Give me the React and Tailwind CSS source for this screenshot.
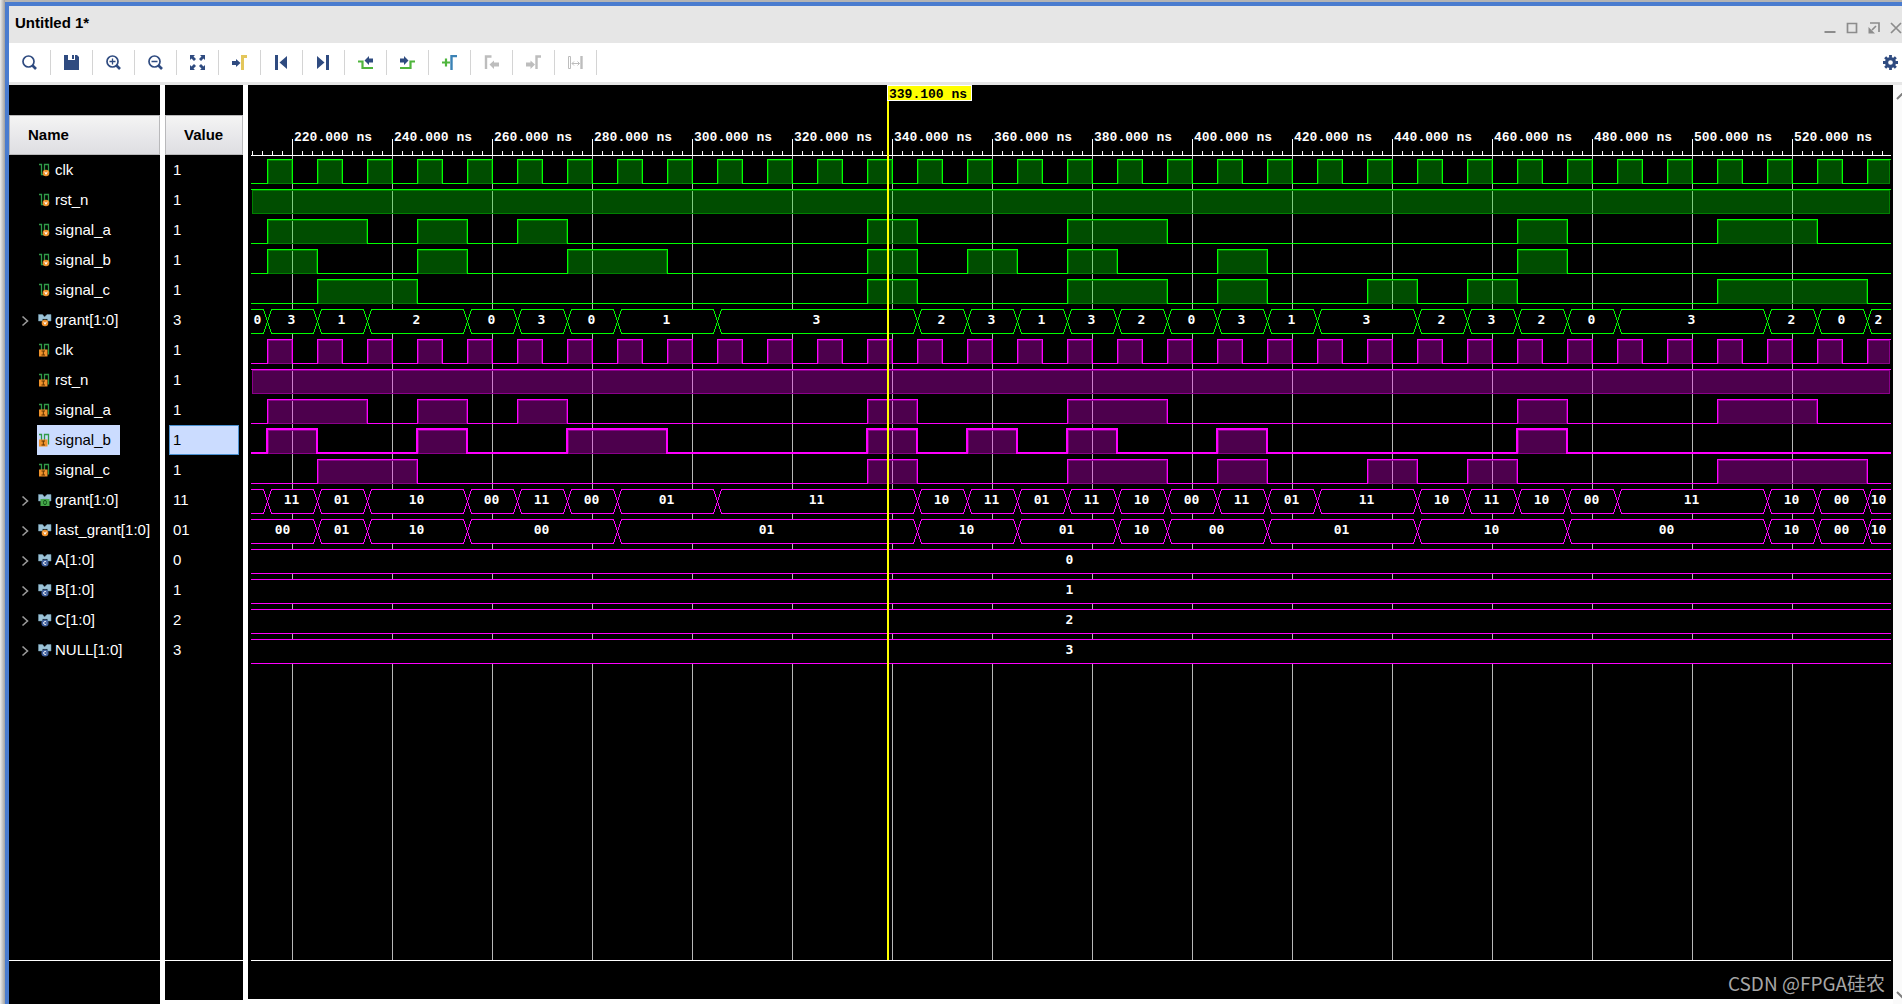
import React, { useState } from "react";

const PX_PER_NS = 5;
const START = 211;
const PLOT_W = 1640;
const ROW_H = 30;
const GRID_BOTTOM = 805;

const xOf = (t) => (t - START) * PX_PER_NS - 4;
const END = START + (PLOT_W + 4) / PX_PER_NS;

const clkHighs = Array.from({ length: 33 }, (_, i) => [215 + i * 10, 220 + i * 10]);
const aHighs = [[215, 235], [245, 255], [265, 275], [335, 345], [375, 395], [465, 475], [505, 525]];
const bHighs = [[215, 225], [245, 255], [275, 295], [335, 345], [355, 365], [375, 385], [405, 415], [465, 475]];
const cHighs = [[225, 245], [335, 345], [375, 395], [405, 415], [435, 445], [455, 465], [505, 535]];

const grantEdges = [
  215, 225, 235, 255, 265, 275, 285, 305, 345, 355, 365, 375, 385, 395, 405,
  415, 425, 445, 455, 465, 475, 485, 515, 525, 535,
];
const grantDec = "0 3 1 2 0 3 0 1 3 2 3 1 3 2 0 3 1 3 2 3 2 0 3 2 0 2".split(" ");
const grantBin = ["", ..."11 01 10 00 11 00 01 11 10 11 01 11 10 00 11 01 11 10 11 10 00 11 10 00 10".split(" ")];
const lastEdges = [225, 235, 255, 285, 345, 365, 385, 395, 415, 445, 475, 515, 525, 535];
const lastVals = "00 01 10 00 01 10 01 10 00 01 10 00 10 00 10".split(" ");

const G = { line: "#00ff00", edge: "#008000" };
const M = { line: "#ff00ff", edge: "#8b008b" };

const signals = [
  { name: "clk", value: "1", icon: "wireV", c: G, highs: clkHighs },
  { name: "rst_n", value: "1", icon: "wireV", c: G, highs: [[START, END]], full: true },
  { name: "signal_a", value: "1", icon: "wireV", c: G, highs: aHighs },
  { name: "signal_b", value: "1", icon: "wireV", c: G, highs: bHighs },
  { name: "signal_c", value: "1", icon: "wireV", c: G, highs: cHighs },
  { name: "grant[1:0]", value: "3", icon: "busV", c: G, edges: grantEdges, vals: grantDec },
  { name: "clk", value: "1", icon: "wireI", c: M, highs: clkHighs },
  { name: "rst_n", value: "1", icon: "wireI", c: M, highs: [[START, END]], full: true },
  { name: "signal_a", value: "1", icon: "wireI", c: M, highs: aHighs },
  { name: "signal_b", value: "1", icon: "wireI", c: M, highs: bHighs },
  { name: "signal_c", value: "1", icon: "wireI", c: M, highs: cHighs },
  { name: "grant[1:0]", value: "11", icon: "busO", c: M, edges: grantEdges, vals: grantBin },
  { name: "last_grant[1:0]", value: "01", icon: "busV", c: M, edges: lastEdges, vals: lastVals },
  { name: "A[1:0]", value: "0", icon: "busC", c: M, edges: [], vals: ["0"] },
  { name: "B[1:0]", value: "1", icon: "busC", c: M, edges: [], vals: ["1"] },
  { name: "C[1:0]", value: "2", icon: "busC", c: M, edges: [], vals: ["2"] },
  { name: "NULL[1:0]", value: "3", icon: "busC", c: M, edges: [], vals: ["3"] },
];

const Ico = ({ children }) => (
  <svg width="15" height="15" viewBox="0 0 15 15" fill="none">
    {children}
  </svg>
);

const NAVY = "#2f4b80";
const GREEN = "#4fb53c";
const GRAY = "#bdbdbd";

const Lens = ({ children }) => (
  <Ico>
    <circle cx="6.5" cy="6.5" r="5.5" stroke={NAVY} strokeWidth="1.7" />
    <path d="M10.5 10.5L14 14" stroke={NAVY} strokeWidth="2.6" />
    {children}
  </Ico>
);

const tools = [
  { label: "Search", icon: <Lens /> },
  {
    label: "Save",
    icon: (
      <Ico>
        <path d="M0 0H4V5H11V0H13L15 2V15H0Z" fill={NAVY} />
        <path d="M8 0H10V4H8Z" fill={NAVY} />
      </Ico>
    ),
  },
  { label: "Zoom In", icon: <Lens><path d="M3.5 6.5h6M6.5 3.5v6" stroke={NAVY} strokeWidth="1.3" /></Lens> },
  { label: "Zoom Out", icon: <Lens><path d="M3.5 6.5h6" stroke={NAVY} strokeWidth="1.5" /></Lens> },
  {
    label: "Zoom Fit",
    icon: (
      <Ico>
        <path
          d="M0 0H5L3.5 1.5 6 4 4 6 1.5 3.5 0 5ZM15 0H10L11.5 1.5 9 4 11 6 13.5 3.5 15 5ZM0 15H5L3.5 13.5 6 11 4 9 1.5 11.5 0 10ZM15 15H10L11.5 13.5 9 11 11 9 13.5 11.5 15 10Z"
          fill={NAVY}
        />
      </Ico>
    ),
  },
  {
    label: "Go to Cursor",
    icon: (
      <Ico>
        <path d="M0 6H4V4L8.5 8 4 12V10H0Z" fill={NAVY} />
        <path d="M10.5 15V1.5H15" stroke="#e3c65b" strokeWidth="3" />
      </Ico>
    ),
  },
  {
    label: "Previous Marker",
    icon: (
      <Ico>
        <path d="M1 0H4V15H1ZM13 1V14L5.5 7.5Z" fill={NAVY} />
      </Ico>
    ),
  },
  {
    label: "Next Marker",
    icon: (
      <Ico>
        <path d="M10 0H13V15H10ZM1 1V14L8.5 7.5Z" fill={NAVY} />
      </Ico>
    ),
  },
  {
    label: "Previous Transition",
    icon: (
      <Ico>
        <path d="M0 6.5H4.5V13H15" stroke={GREEN} strokeWidth="2.2" />
        <path d="M6.5 5.5L11 1V3.5H15V7.5H11V10Z" fill={NAVY} />
      </Ico>
    ),
  },
  {
    label: "Next Transition",
    icon: (
      <Ico>
        <path d="M0 13H10.5V6.5H15" stroke={GREEN} strokeWidth="2.2" />
        <path d="M8.5 5.5L4 1V3.5H0V7.5H4V10Z" fill={NAVY} />
      </Ico>
    ),
  },
  {
    label: "Add Marker",
    icon: (
      <Ico>
        <path d="M0 7.5H8M4 3.5V11.5" stroke={GREEN} strokeWidth="2.2" />
        <path d="M9.5 15V1H15" stroke="#3b82b5" strokeWidth="2.4" />
      </Ico>
    ),
  },
  {
    label: "Previous Edge",
    off: true,
    icon: (
      <Ico>
        <path d="M2 14V1.5H7.5" stroke={GRAY} strokeWidth="2.4" />
        <path d="M5.5 9.5L10 5.5V7.5H15V11.5H10V14Z" fill={GRAY} />
      </Ico>
    ),
  },
  {
    label: "Next Edge",
    off: true,
    icon: (
      <Ico>
        <path d="M10.5 14V1.5H15" stroke={GRAY} strokeWidth="2.4" />
        <path d="M9 9.5L4.5 5.5V7.5H0V11.5H4.5V14Z" fill={GRAY} />
      </Ico>
    ),
  },
  {
    label: "Swap Markers",
    off: true,
    icon: (
      <Ico>
        <path d="M0.5 1.5H2.5V13.5H0.5Z" stroke={GRAY} />
        <path d="M13.5 1V14" stroke={GRAY} strokeWidth="2.4" />
        <path d="M4 8.5H11.5M6 6.5L4 8.5 6 10.5M9.5 6.5L11.5 8.5 9.5 10.5" stroke={GRAY} />
      </Ico>
    ),
  },
];

// small glyph in front of every signal name
const SignalIcon = ({ kind }) => {
  const wire = kind.startsWith("wire");
  const tag = kind.slice(-1);
  return (
    <svg width="14" height="14" viewBox="0 0 14 14" className="shrink-0">
      {wire ? (
        <path d="M1 1.5H3.5V11.5H6.5V1.5H10.5V11.5" fill="none" stroke="#2f9a48" strokeWidth="1.3" />
      ) : (
        <path d="M0.5 1.5H4.5L6.5 4 9 1.5H13V8H9.5V6H4.5V8H0.5Z" fill="#9cc3d8" stroke="#6f98ad" strokeWidth="0.5" />
      )}
      {tag === "V" && (
        <>
          <circle cx={wire ? 8 : 7} cy="10" r="3.3" fill="#f0922b" />
          <path d={wire ? "M6.7 8.7L8 11.3 9.3 8.7" : "M5.7 8.7L7 11.3 8.3 8.7"} fill="none" stroke="#fff" />
        </>
      )}
      {tag === "I" && (
        <>
          <rect x="1" y="6.5" width="8.500" height="7" fill="#f0922b" />
          <path d="M3.5 8H7M5.3 8V12M3.5 12H7" fill="none" stroke="#5a3200" />
        </>
      )}
      {tag === "O" && (
        <>
          <rect x="2.5" y="6" width="9" height="7" fill="#45a749" />
          <ellipse cx="7" cy="9.5" rx="1.5" ry="2.2" fill="none" stroke="#12561b" />
        </>
      )}
      {tag === "C" && (
        <>
          <circle cx="7" cy="10" r="3.6" fill="#3f5f9c" />
          <path d="M8.3 9A1.5 1.5 0 1 0 8.3 11" fill="none" stroke="#fff" />
        </>
      )}
    </svg>
  );
};

const Digital = ({ s, y, bold }) => {
  const top = y + 4.5;
  const bot = y + 28.5;
  let d = `M0 ${s.full ? top : bot}`;
  if (!s.full) {
    s.highs.forEach(([a, b]) => {
      d += `H${xOf(a) + 0.5}V${top}`;
      d += b < END ? `H${xOf(b) + 0.5}V${bot}` : `H${PLOT_W}`;
    });
  }
  if (s.full || s.highs[s.highs.length - 1][1] < END) d += `H${PLOT_W}`;
  return (
    <g>
      {s.highs.map(([a, b]) => {
        const x = Math.max(xOf(a), 0) + 0.5;
        const w = Math.min(xOf(b), PLOT_W - 1) + 0.5 - x;
        return (
          <rect key={a} x={x + 1} y={top + 1} width={w - 2} height="23" fill={s.c.line} fillOpacity="0.3" stroke={s.c.edge} />
        );
      })}
      <path
        d={d}
        fill="none"
        stroke={s.c.line}
        strokeWidth={bold ? 2 : 1}
        transform={bold ? "translate(-0.5 -0.5)" : undefined}
      />
    </g>
  );
};

const Bus = ({ s, y }) => {
  const top = y + 4.5;
  const bot = y + 28.5;
  const mid = y + 16.5;
  const xs = [0, ...s.edges.map(xOf), PLOT_W];
  return (
    <g>
      <rect x="0" y={y + 4} width={PLOT_W} height="25" fill="#000" />
      {s.vals.map((v, i) => {
        const first = i === 0;
        const last = i === s.vals.length - 1;
        const l = xs[i] + 0.5;
        const r = xs[i + 1] + 0.5;
        const half = (edge) =>
          (first ? `M0 ${edge}` : `M${l} ${mid}L${l + 4} ${edge}`) +
          (last ? `H${PLOT_W}` : `H${r - 4}L${r} ${mid}`);
        return (
          <g key={i}>
            <path d={half(top) + half(bot)} fill="none" stroke={s.c.line} />
            <text
              x={(l + r) / 2 - (first ? 2 : 1)}
              y={y + 19}
              textAnchor="middle"
              fill="#fff"
              className="font-['DejaVu_Sans_Mono',monospace] text-[13px] font-bold"
            >
              {v}
            </text>
          </g>
        );
      })}
    </g>
  );
};

const Waves = ({ selected }) => {
  const ticks = Array.from({ length: 164 }, (_, i) => 212 + i * 2);
  const majors = Array.from({ length: 16 }, (_, i) => 220 + i * 20);
  return (
    <svg width={PLOT_W} height="914" className="block font-['Liberation_Mono',monospace]" shapeRendering="crispEdges">
      {ticks.map((t) => (
        <path key={t} d={`M${xOf(t) + 0.5} ${t % 10 === 0 ? 65 : 66}V70`} stroke="#fff" />
      ))}
      {majors.map((t) => (
        <g key={t}>
          <path d={`M${xOf(t) + 0.5} 54V70`} stroke="#fff" />
          <path d={`M${xOf(t) + 0.5} 71V${GRID_BOTTOM + 70}`} stroke="#b8b8b8" />
          <text x={xOf(t) + 2} y="56" fill="#fff" className="text-[13px] font-bold">
            {t}.000 ns
          </text>
        </g>
      ))}
      <path d={`M0 70.5H${PLOT_W}M0 875.5H${PLOT_W}`} stroke="#fff" />
      <g>
        {signals.map((s, i) =>
          s.highs ? (
            <Digital key={i} s={s} y={70 + i * ROW_H} bold={i === selected} />
          ) : (
            <Bus key={i} s={s} y={70 + i * ROW_H} />
          )
        )}
      </g>
      <rect x="636" y="0" width="2" height="875" fill="#ffff00" />
      <rect x="636.5" y="0.5" width="84" height="15" fill="#ffff00" stroke="#fff" />
      <text x="638" y="13" fill="#000" className="text-[13px] font-bold">
        339.100 ns
      </text>
    </svg>
  );
};

const App = () => {
  const [selected, setSelected] = useState(9);

  return (
    <div className="flex h-screen w-full overflow-hidden bg-white font-['Liberation_Sans',Arial,sans-serif] text-[15px] text-black">
      <div className="w-[5px] shrink-0 bg-linear-to-r from-[#ececec] to-[#a0a0a0]" />
      <div className="flex min-w-0 flex-1 flex-col border-l-4 border-[#4a7ccf]">
        <div className="-ml-1 h-[2px] shrink-0 bg-[#b4b4b4]" />
        <div className="-ml-1 h-1 shrink-0 bg-[#4a7ccf]" />

        <header className="flex h-[37px] shrink-0 items-center justify-between bg-[#e6e6e6] pl-[6px]">
          <h1 className="pb-[2px] text-[15px] font-bold">Untitled 1*</h1>
          <div className="flex gap-[10px] pt-[6px]">
            <button aria-label="Minimize">
              <svg width="12" height="12" viewBox="0 0 12 12"><path d="M0.5 10H11.5" stroke="#8c8c8c" strokeWidth="2" /></svg>
            </button>
            <button aria-label="Maximize">
              <svg width="12" height="12" viewBox="0 0 12 12"><path d="M1.5 1.5H10.5V10.5H1.5Z" fill="none" stroke="#8c8c8c" strokeWidth="1.7" /></svg>
            </button>
            <button aria-label="Float">
              <svg width="12" height="12" viewBox="0 0 12 12">
                <path d="M2 1H11V10M8 4L4 8" fill="none" stroke="#8c8c8c" strokeWidth="1.7" />
                <path d="M0.5 5V11.5H7Z" fill="#8c8c8c" />
              </svg>
            </button>
            <button aria-label="Close">
              <svg width="12" height="12" viewBox="0 0 12 12"><path d="M1 1L11 11M11 1L1 11" stroke="#8c8c8c" strokeWidth="1.7" /></svg>
            </button>
          </div>
        </header>

        <div className="flex h-[42px] shrink-0 items-center justify-between border-b-3 border-[#e6e6e6] bg-white pr-1">
          <div className="flex">
            {tools.map((t) => (
              <button
                key={t.label}
                aria-label={t.label}
                disabled={t.off}
                className="flex h-[25px] w-[42px] items-center justify-center border-r border-[#d4d4d4]"
              >
                {t.icon}
              </button>
            ))}
          </div>
          <button aria-label="Settings">
            <svg width="15" height="15" viewBox="0 0 16 16">
              <circle cx="8" cy="8" r="4.2" fill="none" stroke={NAVY} strokeWidth="3.4" />
              <path d="M8 0V3M8 13V16M0 8H3M13 8H16M2.3 2.3L4.5 4.5M11.5 11.5L13.7 13.7M13.7 2.3L11.5 4.5M4.5 11.5L2.3 13.7" stroke={NAVY} strokeWidth="3" />
            </svg>
          </button>
        </div>

        <main className="flex min-h-0 flex-1">
          <section className="flex w-[151px] shrink-0 flex-col bg-black text-white">
            <div className="h-[30px] shrink-0" />
            <h2 className="flex h-10 shrink-0 items-center border border-[#b9b9bb] bg-linear-to-b from-[#f4f4f4] to-[#dedee2] pl-[18px] text-[15px] font-bold text-black">
              Name
            </h2>
            <ul className="flex-1 border-b border-white">
              {signals.map((s, i) => (
                <li key={i} className="flex h-[30px] items-center">
                  <span className="flex w-7 shrink-0 pt-[2px] pl-3">
                    {s.vals && (
                      <svg width="8" height="12" viewBox="0 0 8 12">
                        <path d="M1.5 1.5L6.5 6 1.5 10.5" fill="none" stroke="#9a9a9a" strokeWidth="1.6" />
                      </svg>
                    )}
                  </span>
                  <button
                    onClick={() => setSelected(i)}
                    className={
                      i === selected
                        ? "flex h-[30px] items-center gap-[3px] bg-[#cbdcff] pr-[9px] pl-[1px] whitespace-nowrap text-black"
                        : "flex h-[30px] items-center gap-[3px] pl-[1px] whitespace-nowrap"
                    }
                  >
                    <SignalIcon kind={s.icon} />
                    {s.name}
                  </button>
                </li>
              ))}
            </ul>
            <div className="h-[43px] shrink-0" />
          </section>

          <div className="w-[5px] shrink-0 bg-white" />

          <section className="mb-1 flex w-[78px] shrink-0 flex-col bg-black text-white">
            <div className="h-[30px] shrink-0" />
            <h2 className="flex h-10 shrink-0 items-center border border-[#b9b9bb] bg-linear-to-b from-[#f4f4f4] to-[#dedee2] pl-[18px] text-[15px] font-bold text-black">
              Value
            </h2>
            <ul className="flex-1 border-b border-white px-1">
              {signals.map((s, i) => (
                <li
                  key={i}
                  className={
                    i === selected
                      ? "flex h-[30px] items-center border border-[#4a90d0] bg-[#cbdcff] pl-[3px] text-black"
                      : "flex h-[30px] items-center pl-1"
                  }
                >
                  {s.value}
                </li>
              ))}
            </ul>
            <div className="h-[39px] shrink-0" />
          </section>

          <div className="w-[5px] shrink-0 bg-white" />

          <section className="relative mb-[5px] min-w-0 flex-1 overflow-hidden bg-black pl-[3px]">
            <Waves selected={selected} />
            <p className="absolute right-2 bottom-[2px] font-['Noto_Sans_CJK_SC',sans-serif] text-[19px] leading-7 text-[#a6a6a6]">
              CSDN @FPGA硅农
            </p>
          </section>

          <div className="flex w-[9px] shrink-0 flex-col justify-between overflow-hidden bg-[#fafafa] pt-2 pb-[5px] pl-[3px]">
            <svg width="12" height="8" viewBox="0 0 12 8"><path d="M1 6L6 1 11 6" fill="none" stroke="#7d7d7d" strokeWidth="2" /></svg>
            <svg width="12" height="8" viewBox="0 0 12 8"><path d="M1 1L6 6 11 1" fill="none" stroke="#7d7d7d" strokeWidth="2" /></svg>
          </div>
        </main>
      </div>
    </div>
  );
};

export default App;
